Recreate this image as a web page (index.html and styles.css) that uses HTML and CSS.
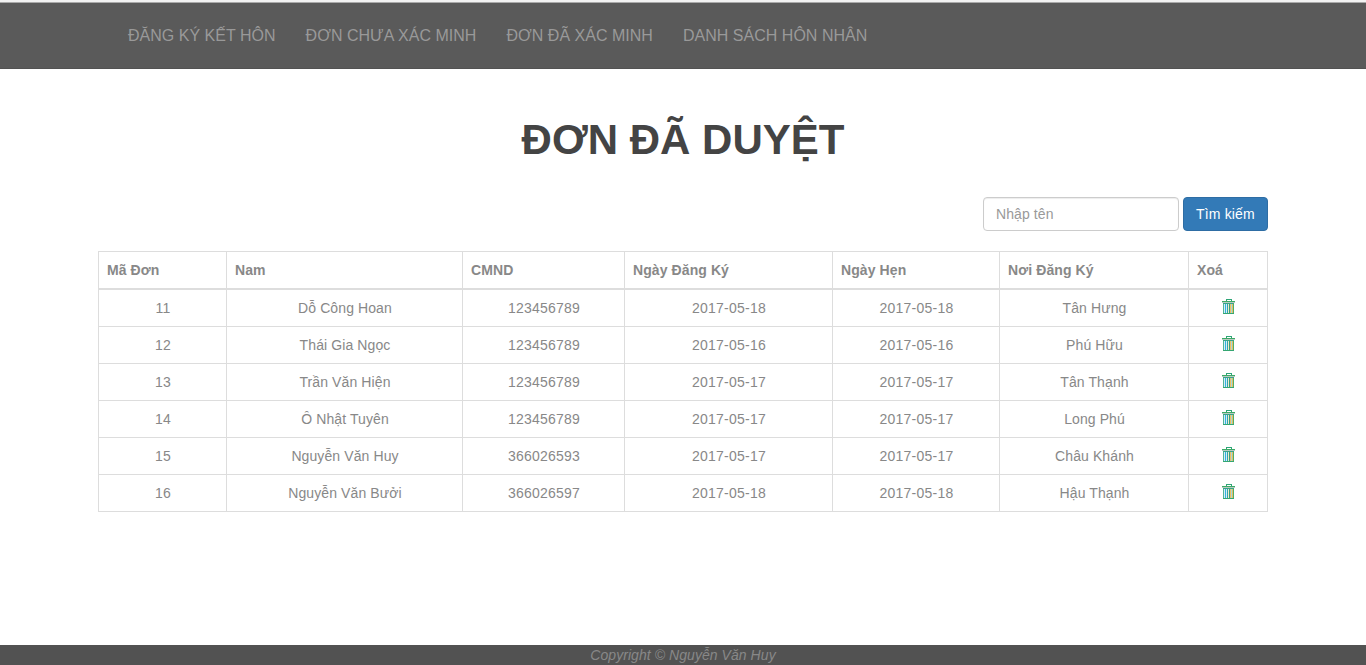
FILE: index.html
```html
<!DOCTYPE html>
<html lang="vi">
<head>
<meta charset="utf-8">
<title>Đơn đã duyệt</title>
<link rel="stylesheet" href="styles.css">
</head>
<body>
<svg class="sprite" aria-hidden="true">
  <symbol id="trash" viewBox="0 0 13 15">
    <path d="M4.5 2V.5h5V2" fill="none" stroke="#2fa577"/>
    <rect x="0" y="2" width="13" height="1" fill="#3bab65"/>
    <rect x="0" y="3" width="13" height="1" fill="#b9c9c1"/>
    <rect x="1" y="4" width="11" height="1" fill="#3aa587"/>
    <rect x="1" y="5" width="1" height="9" fill="#4fb39a"/>
    <rect x="2" y="5" width="1" height="9" fill="#d9f0f4"/>
    <rect x="3" y="5" width="1" height="9" fill="#35b0e0"/>
    <rect x="4" y="5" width="1" height="9" fill="#d3eff5"/>
    <rect x="5" y="5" width="1" height="9" fill="#2fa5b0"/>
    <rect x="6" y="5" width="1" height="9" fill="#f2eac4"/>
    <rect x="7" y="5" width="1" height="9" fill="#3a9f80"/>
    <rect x="8" y="5" width="1" height="9" fill="#eebf68"/>
    <rect x="9" y="5" width="1" height="9" fill="#a4d9dc"/>
    <rect x="10" y="5" width="1" height="9" fill="#e6c062"/>
    <rect x="11" y="5" width="1" height="9" fill="#4fae6c"/>
    <rect x="1" y="14" width="11" height="1" fill="#35a672"/>
  </symbol>
</svg>
<nav class="navbar">
  <a>ĐĂNG KÝ KẾT HÔN</a>
  <a>ĐƠN CHƯA XÁC MINH</a>
  <a>ĐƠN ĐÃ XÁC MINH</a>
  <a>DANH SÁCH HÔN NHÂN</a>
</nav>
<main class="container">
  <h1 class="title">ĐƠN ĐÃ DUYỆT</h1>
  <form class="search">
    <input class="search-input" type="text" placeholder="Nhập tên">
    <button class="search-button" type="button">Tìm kiếm</button>
  </form>
  <table class="records">
    <colgroup><col class="c-id"><col class="c-name"><col class="c-cmnd"><col class="c-reg"><col class="c-due"><col class="c-place"><col class="c-del"></colgroup>
    <thead>
      <tr><th>Mã Đơn</th><th>Nam</th><th>CMND</th><th>Ngày Đăng Ký</th><th>Ngày Hẹn</th><th>Nơi Đăng Ký</th><th>Xoá</th></tr>
    </thead>
    <tbody>
      <tr><td>11</td><td>Dỗ Công Hoan</td><td>123456789</td><td>2017-05-18</td><td>2017-05-18</td><td>Tân Hưng</td><td><svg class="trash"><use href="#trash"/></svg></td></tr>
      <tr><td>12</td><td>Thái Gia Ngọc</td><td>123456789</td><td>2017-05-16</td><td>2017-05-16</td><td>Phú Hữu</td><td><svg class="trash"><use href="#trash"/></svg></td></tr>
      <tr><td>13</td><td>Trần Văn Hiện</td><td>123456789</td><td>2017-05-17</td><td>2017-05-17</td><td>Tân Thạnh</td><td><svg class="trash"><use href="#trash"/></svg></td></tr>
      <tr><td>14</td><td>Ô Nhật Tuyên</td><td>123456789</td><td>2017-05-17</td><td>2017-05-17</td><td>Long Phú</td><td><svg class="trash"><use href="#trash"/></svg></td></tr>
      <tr><td>15</td><td>Nguyễn Văn Huy</td><td>366026593</td><td>2017-05-17</td><td>2017-05-17</td><td>Châu Khánh</td><td><svg class="trash"><use href="#trash"/></svg></td></tr>
      <tr><td>16</td><td>Nguyễn Văn Bưởi</td><td>366026597</td><td>2017-05-18</td><td>2017-05-18</td><td>Hậu Thạnh</td><td><svg class="trash"><use href="#trash"/></svg></td></tr>
    </tbody>
  </table>
</main>
<footer class="footer">Copyright © Nguyễn Văn Huy</footer>
</body>
</html>
```
FILE: styles.css
```css
* { box-sizing: border-box; }
body {
  margin: 0;
  height: 665px;
  overflow: hidden;
  display: flex;
  flex-direction: column;
  border-top: 2px solid #f2f2f2;
  background: #fff;
  color: #888;
  font: 14px/20px "Liberation Sans", Arial, sans-serif;
}
.sprite { display: none; }
.navbar {
  flex: none;
  display: flex;
  gap: 30px;
  height: 67px;
  padding: 23px 0 0 128px;
  background: #5a5a5a;
  border-top: 1px solid #aaa;
  border-bottom: 1px solid #525252;
  color: #999;
  font-size: 16px;
  letter-spacing: .02px;
}
.navbar a { white-space: nowrap; }
.container { width: 1170px; margin: 0 auto; flex: 1; }
.title {
  margin: 46px 0 32px;
  color: #444;
  font-size: 42px;
  line-height: 50px;
  text-align: center;
}
.search { display: flex; justify-content: flex-end; gap: 4px; margin-bottom: 20px; }
.search-input {
  width: 196px;
  height: 34px;
  padding: 6px 12px;
  border: 1px solid #ccc;
  border-radius: 4px;
  box-shadow: inset 0 1px 1px rgba(0, 0, 0, .075);
  font: inherit;
  letter-spacing: .1px;
}
.search-input::placeholder { color: #999; opacity: 1; }
.search-button {
  width: 85px;
  height: 34px;
  padding: 0;
  border: 1px solid #2e6da4;
  border-radius: 4px;
  background: #337ab7;
  color: #fff;
  font: inherit;
  letter-spacing: .15px;
}
.records { width: 1170px; table-layout: fixed; border-collapse: collapse; }
.c-id { width: 128px; }
.c-name { width: 236px; }
.c-cmnd { width: 162px; }
.c-reg { width: 208px; }
.c-due { width: 167px; }
.c-place { width: 189px; }
.c-del { width: 79px; }
.records th, .records td { border: 1px solid #ddd; padding: 8px; }
.records th { text-align: left; border-bottom-width: 2px; letter-spacing: .09px; }
.records td { padding-left: 9px; text-align: center; letter-spacing: .22px; }
.records td:nth-child(2), .records td:nth-child(6) { letter-spacing: .1px; }
.records td:last-child { padding-left: 8px; }
.trash { display: block; width: 13px; height: 15px; margin: 1px auto 4px; shape-rendering: crispEdges; }
.footer {
  flex: none;
  height: 20px;
  background: #525252;
  text-align: center;
  font-style: italic;
  letter-spacing: .06px;
}
```
